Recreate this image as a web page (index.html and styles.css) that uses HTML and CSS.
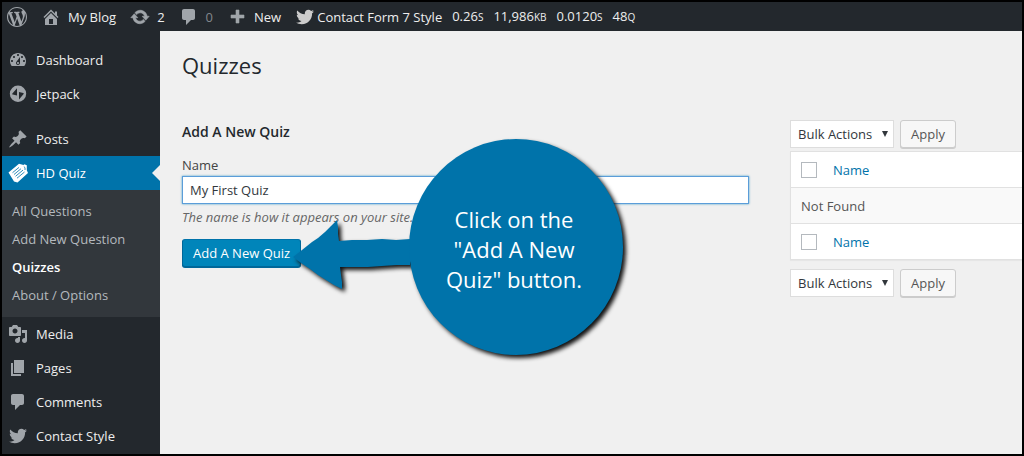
FILE: index.html
```html
<!DOCTYPE html>
<html lang="en">
<head>
    <meta charset="UTF-8">
    <meta name="viewport" content="width=device-width, initial-scale=1.0">
    <title>Quizzes</title>
    <link rel="stylesheet" href="styles.css">
</head>
<body>
    <!-- Shared icons -->
    <svg class="sprite" aria-hidden="true">
        <symbol id="icon-comment" viewBox="0 0 20 20"><path d="M5 2h9c1.1 0 2 .9 2 2v7c0 1.1-.9 2-2 2h-2l-5 5v-5H5c-1.1 0-2-.9-2-2V4c0-1.1.9-2 2-2z"/></symbol>
        <symbol id="icon-twitter" viewBox="0 0 20 20"><path d="M18.94 4.46c-.49.73-1.11 1.38-1.83 1.9.01.15.01.31.01.47 0 4.85-3.69 10.44-10.43 10.44-2.07 0-4-.61-5.63-1.65.29.03.58.05.88.05 1.72 0 3.3-.59 4.55-1.57-1.6-.03-2.95-1.09-3.42-2.55.22.04.45.07.69.07.33 0 .66-.05.96-.13-1.67-.34-2.94-1.82-2.94-3.6v-.04c.5.27 1.06.44 1.66.46-.98-.66-1.63-1.78-1.63-3.06 0-.67.18-1.3.5-1.84 1.81 2.22 4.51 3.68 7.56 3.83-.06-.27-.1-.55-.1-.84 0-2.02 1.65-3.66 3.67-3.66 1.06 0 2.01.44 2.68 1.16.83-.17 1.62-.47 2.33-.89-.28.85-.86 1.57-1.62 2.02.75-.08 1.45-.28 2.11-.57z"/></symbol>
    </svg>

    <header class="adminbar">
        <a class="bar-item" href="#" aria-label="WordPress">
            <svg class="icon" viewBox="0 0 20 20"><path d="M20 10c0-5.51-4.49-10-10-10C4.48 0 0 4.49 0 10c0 5.52 4.48 10 10 10 5.51 0 10-4.48 10-10zM7.78 15.37L4.37 6.22c.55-.02 1.17-.08 1.17-.08.5-.06.44-1.13-.06-1.11 0 0-1.45.11-2.37.11-.18 0-.37 0-.58-.01C4.12 2.69 6.87 1.11 10 1.11c2.33 0 4.45.87 6.05 2.34-.68-.11-1.65.39-1.65 1.58 0 .74.45 1.36.9 2.1.35.61.55 1.36.55 2.46 0 1.49-1.4 5-1.4 5l-3.03-8.37c.54-.02.82-.17.82-.17.5-.05.44-1.25-.06-1.22 0 0-1.44.12-2.38.12-.87 0-2.33-.12-2.33-.12-.5-.03-.56 1.2-.06 1.22l.92.08 1.26 3.41zM17.41 10c.24-.64.74-1.87.43-4.25.7 1.29 1.05 2.71 1.05 4.25 0 3.29-1.73 6.24-4.4 7.78.97-2.59 1.94-5.2 2.92-7.78zM6.1 18.09C3.12 16.65 1.11 13.53 1.11 10c0-1.3.23-2.48.72-3.59C3.25 10.3 4.67 14.2 6.1 18.09zm4.03-6.63l2.58 6.98c-.86.29-1.76.45-2.71.45-.79 0-1.57-.11-2.29-.33.81-2.38 1.62-4.74 2.42-7.1z"/></svg>
        </a>
        <a class="bar-item" href="#">
            <svg class="icon" viewBox="0 0 20 20"><path d="M16 8.5l1.53 1.53-1.06 1.06L10 4.6l-6.47 6.49-1.06-1.06L10 2.5l4 4v-2h2v4zm-6-2.46l6 5.99V18H4v-5.97zM12 17v-5H8v5h4z"/></svg>
            My Blog
        </a>
        <a class="bar-item" href="#">
            <svg class="icon" viewBox="0 0 20 20"><path class="bold-shape" d="M10.2 3.28c3.53 0 6.43 2.61 6.92 6h2.08l-3.5 4-3.5-4h2.32c-.45-1.97-2.21-3.45-4.32-3.45-1.45 0-2.73.71-3.54 1.78L4.95 5.66C6.23 4.2 8.11 3.28 10.2 3.28zm-.4 13.44c-3.52 0-6.43-2.61-6.92-6H.8l3.5-4c1.17 1.33 2.33 2.67 3.5 4H5.48c.45 1.97 2.21 3.45 4.32 3.45 1.45 0 2.73-.71 3.54-1.78l1.71 1.95c-1.28 1.46-3.15 2.38-5.25 2.38z"/></svg>
            2
        </a>
        <a class="bar-item muted" href="#">
            <svg class="icon"><use href="#icon-comment"/></svg>
            0
        </a>
        <a class="bar-item" href="#">
            <svg class="icon" viewBox="0 0 20 20"><path class="bold-shape" d="M17 8v3h-5v5H9v-5H4V8h5V3h3v5h5z"/></svg>
            New
        </a>
        <a class="bar-item style-link" href="#">
            <svg class="icon"><use href="#icon-twitter"/></svg>
            Contact Form 7 Style
        </a>
        <a class="stats" href="#">
            <span>0.26<small>S</small></span>
            <span>11,986<small>KB</small></span>
            <span>0.0120<small>S</small></span>
            <span>48<small>Q</small></span>
        </a>
    </header>

    <div class="layout">
        <nav class="sidebar">
            <a class="menu-item" href="#">
                <svg class="icon" viewBox="0 0 20 20"><path d="M3.76 16h12.48c1.1-1.37 1.76-3.11 1.76-5 0-4.42-3.58-8-8-8s-8 3.58-8 8c0 1.89.66 3.63 1.76 5zM10 4c.55 0 1 .45 1 1s-.45 1-1 1-1-.45-1-1 .45-1 1-1zM6 6c.55 0 1 .45 1 1s-.45 1-1 1-1-.45-1-1 .45-1 1-1zm8 0c.55 0 1 .45 1 1s-.45 1-1 1-1-.45-1-1 .45-1 1-1zm-5.37 5.55L12 7v6c0 1.1-.9 2-2 2s-2-.9-2-2c0-.57.24-1.08.63-1.45zM4 10c.55 0 1 .45 1 1s-.45 1-1 1-1-.45-1-1 .45-1 1-1zm12 0c.55 0 1 .45 1 1s-.45 1-1 1-1-.45-1-1 .45-1 1-1zm-5 3c0-.55-.45-1-1-1s-1 .45-1 1 .45 1 1 1 1-.45 1-1z"/></svg>
                Dashboard
            </a>
            <a class="menu-item" href="#">
                <svg class="icon" viewBox="0 0 20 20"><path fill-rule="evenodd" d="M10 1.6a8.2 8.2 0 1 0 0 16.4a8.2 8.2 0 1 0 0-16.4zM9 4.2v7.4l-4.2-1c-.6-.2-.7-.6-.4-1.1zM11 15.4V8l4.2 1c.6.2.7.6.4 1.1z"/></svg>
                Jetpack
            </a>
            <a class="menu-item group-start" href="#">
                <svg class="icon" viewBox="0 0 20 20"><path d="M10.44 3.02l1.82-1.82 6.36 6.35-1.83 1.82c-1.05-.68-2.48-.57-3.41.36l-.75.75c-.92.93-1.04 2.35-.35 3.41l-1.83 1.82-2.41-2.41-2.8 2.79c-.42.42-3.38 2.71-3.8 2.29s1.86-3.39 2.28-3.81l2.79-2.79L4.1 9.36l1.83-1.82c1.05.69 2.48.57 3.4-.36l.75-.75c.93-.92 1.05-2.35.36-3.41z"/></svg>
                Posts
            </a>
            <a class="menu-item current" href="#">
                <svg class="icon" viewBox="0 0 20 20">
                    <path d="M.5 9.5L11 .8l4.5 1.2.8-.8 2.5 1v5L20 10 9.5 19.5 6 18.5z"/>
                    <path class="icon-lines" d="M4.5 9.7l6.5-5.3M6 11.5l7-5.8M7.5 13.3l7.5-6.2M9 15.2l7.5-6.2M15.8 3.5l1.2 1.2v2.3"/>
                </svg>
                HD Quiz
            </a>
            <div class="submenu">
                <a href="#">All Questions</a>
                <a href="#">Add New Question</a>
                <a class="active" href="#">Quizzes</a>
                <a href="#">About / Options</a>
            </div>
            <a class="menu-item" href="#">
                <svg class="icon" viewBox="0 0 20 20"><path d="M13 11V4c0-.55-.45-1-1-1h-1.67L9 1H5L3.67 3H2c-.55 0-1 .45-1 1v7c0 .55.45 1 1 1h10c.55 0 1-.45 1-1zM7 4.5c1.38 0 2.5 1.12 2.5 2.5S8.38 9.5 7 9.5 4.5 8.38 4.5 7 5.62 4.5 7 4.5zM14 6h5v10.5c0 1.38-1.12 2.5-2.5 2.5S14 17.88 14 16.5s1.12-2.5 2.5-2.5c.17 0 .34.02.5.05V9h-3V6zm-4 8.05V13h2v3.5c0 1.38-1.12 2.5-2.5 2.5S7 17.88 7 16.5 8.12 14 9.5 14c.17 0 .34.02.5.05z"/></svg>
                Media
            </a>
            <a class="menu-item" href="#">
                <svg class="icon" viewBox="0 0 20 20"><path d="M6 15V2h10v13H6zm-1 1h8v2H3V5h2v11z"/></svg>
                Pages
            </a>
            <a class="menu-item" href="#">
                <svg class="icon"><use href="#icon-comment"/></svg>
                Comments
            </a>
            <a class="menu-item" href="#">
                <svg class="icon"><use href="#icon-twitter"/></svg>
                Contact Style
            </a>
        </nav>

        <main class="content">
            <h1>Quizzes</h1>
            <div class="columns">
                <form class="add-form">
                    <h2>Add A New Quiz</h2>
                    <label for="quizName">Name</label>
                    <input type="text" id="quizName" value="My First Quiz">
                    <p class="hint">The name is how it appears on your site.</p>
                    <button type="button" class="primary">Add A New Quiz</button>
                </form>

                <section class="list">
                    <div class="actions">
                        <span class="select-wrap">
                            <select aria-label="Bulk actions, top"><option>Bulk Actions</option></select>
                        </span>
                        <button type="button" class="secondary">Apply</button>
                    </div>
                    <table>
                        <thead>
                            <tr>
                                <td class="check"><input type="checkbox" aria-label="Select all, top"></td>
                                <th><a href="#">Name</a></th>
                            </tr>
                        </thead>
                        <tbody>
                            <tr><td class="empty" colspan="2">Not Found</td></tr>
                        </tbody>
                        <tfoot>
                            <tr>
                                <td class="check"><input type="checkbox" aria-label="Select all, bottom"></td>
                                <th><a href="#">Name</a></th>
                            </tr>
                        </tfoot>
                    </table>
                    <div class="actions">
                        <span class="select-wrap">
                            <select aria-label="Bulk actions, bottom"><option>Bulk Actions</option></select>
                        </span>
                        <button type="button" class="secondary">Apply</button>
                    </div>
                </section>
            </div>

            <!-- Instruction bubble over the form -->
            <div class="callout">
                <svg viewBox="0 0 340 226" aria-hidden="true">
                    <path d="M1 119L10 112 20 104 26 100 33 94 39 88 45 82 46 89 46 96 47 103 60 102 75 102 90 101 104 102 118 101 118 127 105 127 90 128 76 129 62 129 48 129 49 137 50 144 50 151 42 147 34 142 26 137 18 131 9 125z"/>
                    <ellipse cx="224" cy="109" rx="107" ry="108"/>
                </svg>
                <p>Click on the<br>"Add A New<br>Quiz" button.</p>
            </div>
        </main>
    </div>
</body>
</html>
```
FILE: styles.css
```css
* {
    box-sizing: border-box;
}

body {
    margin: 0;
    height: 100vh;
    display: flex;
    flex-direction: column;
    overflow: hidden;
    border: 2px solid #000;
    background: #f0f0f0;
    color: #444;
    font-family: "Open Sans", "Noto Sans", sans-serif;
    font-size: 13px;
    line-height: 18px;
}

a {
    text-decoration: none;
}

.sprite {
    display: none;
}

.icon {
    width: 20px;
    height: 20px;
    flex: none;
    fill: #a0a5aa;
}

.bold-shape {
    stroke: #a0a5aa;
    stroke-width: 0.6;
}

/* Admin bar */
.adminbar {
    display: flex;
    align-items: center;
    gap: 14px;
    height: 29px;
    flex: none;
    padding-left: 5px;
    background: #23282d;
    white-space: nowrap;
}

.bar-item {
    display: flex;
    align-items: center;
    gap: 7px;
    color: #eee;
}

.bar-item.muted {
    color: #82878c;
}

.style-link {
    gap: 2px;
}

.style-link .icon {
    fill: #ccc;
}

.stats {
    display: flex;
    gap: 10px;
    margin-left: -4px;
    color: #eee;
}

.stats small {
    font-size: 10px;
}

/* Sidebar */
.layout {
    display: flex;
    flex: 1;
    min-height: 0;
}

.sidebar {
    width: 158px;
    flex: none;
    padding-top: 12px;
    background: #23282d;
}

.menu-item {
    display: flex;
    align-items: center;
    gap: 8px;
    height: 34px;
    padding-left: 6px;
    color: #eee;
}

.group-start {
    margin-top: 11px;
}

.current {
    position: relative;
    background: #0073aa;
    color: #fff;
}

.current .icon {
    fill: #fff;
}

.icon-lines {
    fill: none;
    stroke: #0073aa;
    stroke-width: 0.8;
}

.current::after {
    content: "";
    position: absolute;
    right: 0;
    top: 9px;
    border: 8px solid transparent;
    border-left: 0;
    border-right-color: #f0f0f0;
}

.submenu {
    padding: 7px 0 8px;
    background: #32373c;
}

.submenu a {
    display: block;
    padding: 5px 10px;
    color: #b4b9be;
}

.submenu .active {
    color: #fff;
    font-weight: 600;
}

/* Content */
.content {
    position: relative;
    flex: 1;
    min-width: 0;
    padding: 19px 0 0 22px;
}

h1 {
    margin: 0;
    color: #23282d;
    font-size: 22px;
    font-weight: 400;
    line-height: 30px;
}

.columns {
    display: grid;
    grid-template-columns: 22fr 9fr;
    gap: 41px;
    padding-top: 40px;
}

.add-form {
    display: flex;
    flex-direction: column;
    align-items: flex-start;
}

h2 {
    margin: 3px 0 15px;
    color: #23282d;
    font-size: 14px;
    font-weight: 600;
    line-height: 18px;
}

.add-form input {
    width: 100%;
    height: 28px;
    margin-top: 2px;
    padding: 0 7px;
    border: 1px solid #5b9dd9;
    box-shadow: 0 0 2px rgba(30, 140, 190, 0.8);
    background: #fff;
    color: #32373c;
    font: inherit;
}

.hint {
    margin: 4px 0 13px;
    color: #666;
    font-style: italic;
}

button {
    height: 28px;
    padding: 0 10px;
    border-radius: 3px;
    font: inherit;
}

.primary {
    border: 1px solid #006799;
    border-top-color: #0073aa;
    box-shadow: 0 1px 0 #006799;
    background: #0085ba;
    color: #fff;
}

.secondary {
    border: 1px solid #ccc;
    box-shadow: 0 1px 0 #ccc;
    background: #f7f7f7;
    color: #555;
}

/* Quiz list */
.actions {
    display: flex;
    gap: 6px;
}

.select-wrap {
    position: relative;
}

.select-wrap::after {
    content: "";
    position: absolute;
    right: 6px;
    top: 11px;
    border: 3px solid transparent;
    border-top: 6px solid #32373c;
    border-bottom: 0;
    pointer-events: none;
}

select {
    appearance: none;
    width: 104px;
    height: 28px;
    padding: 0 0 0 7px;
    border: 1px solid #ddd;
    border-radius: 0;
    background: #fff;
    color: #32373c;
    font: inherit;
}

table {
    width: 100%;
    margin: 3px 0 9px;
    border: 1px solid #e1e1e1;
    border-right: 0;
    border-spacing: 0;
    box-shadow: 0 1px 1px rgba(0, 0, 0, 0.04);
    background: #fff;
}

th,
td {
    height: 35px;
    padding: 0 10px;
    text-align: left;
    font-weight: 400;
}

th {
    padding-left: 4px;
}

th a {
    color: #0073aa;
}

.check {
    width: 38px;
}

.check input {
    appearance: none;
    display: block;
    width: 16px;
    height: 16px;
    margin: 0;
    border: 1px solid #b4b9be;
    background: #fff;
}

.empty {
    height: 37px;
    border-top: 1px solid #e1e1e1;
    border-bottom: 1px solid #e1e1e1;
    background: #f9f9f9;
    color: #555;
}

/* Callout */
.callout {
    position: absolute;
    left: 132px;
    top: 107px;
    width: 340px;
}

.callout svg {
    display: block;
    width: 340px;
    height: 226px;
    overflow: visible;
    fill: #0073aa;
    filter: drop-shadow(3px 3px 2px #111);
}

.callout p {
    position: absolute;
    left: 115px;
    top: 66px;
    width: 214px;
    margin: 0;
    color: #fff;
    font-size: 22px;
    line-height: 30px;
    text-align: center;
}
```
